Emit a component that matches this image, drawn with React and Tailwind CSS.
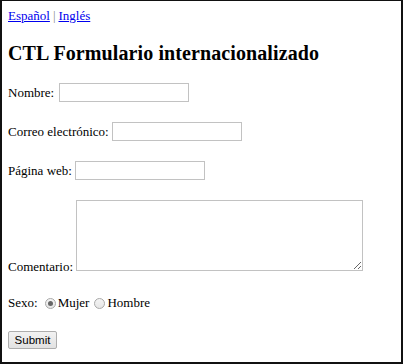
export default function App() {
  return (
    <div className="w-[403px] h-[364px] bg-white border-t border-l-2 border-r-2 border-b-2 border-[#111] overflow-hidden font-['Liberation_Serif',serif] text-[13px] leading-[16px] text-black">
      <div className="pl-[6px] pt-[7px] flex flex-col">
        <div className="h-[16px] flex items-center">
          <a href="#" className="text-[#0000ee] underline">Español</a>
          <span className="text-[#888] mx-[3px]">|</span>
          <a href="#" className="text-[#0000ee] underline">Inglés</a>
        </div>

        <h2 className="mt-[17px] text-[20px] leading-[24px] font-bold tracking-[0.1px]">CTL Formulario internacionalizado</h2>

        <div className="mt-[18px] flex items-center gap-[5px] h-[19px]">
          <span>Nombre:</span>
          <input type="text" className="w-[130px] h-[19px] border border-[#c2c2c2] bg-white outline-none" />
        </div>

        <div className="mt-[20px] flex items-center gap-[3px] h-[19px]">
          <span>Correo electrónico:</span>
          <input type="text" className="w-[130px] h-[19px] border border-[#c2c2c2] bg-white outline-none" />
        </div>

        <div className="mt-[20px] flex items-center gap-[3px] h-[19px]">
          <span>Página web:</span>
          <input type="text" className="w-[130px] h-[19px] border border-[#c2c2c2] bg-white outline-none" />
        </div>

        <div className="mt-[20px] flex items-end gap-[3px]">
          <span className="-mb-1">Comentario:</span>
          <textarea className="w-[287px] h-[71px] border border-[#c2c2c2] bg-white outline-none resize" />
        </div>

        <div className="mt-[24px] flex items-center h-[16px]">
          <span>Sexo:</span>
          <span className="ml-[7px] w-[11px] h-[11px] rounded-full border border-[#a8a8a8] bg-gradient-to-b from-[#f4f4f4] to-[#e6e6e6] flex items-center justify-center">
            <span className="w-[5px] h-[5px] rounded-full bg-[#666]" />
          </span>
          <span className="ml-[2px]">Mujer</span>
          <span className="ml-[5px] w-[11px] h-[11px] rounded-full border border-[#a8a8a8] bg-gradient-to-b from-[#f4f4f4] to-[#e6e6e6]" />
          <span className="ml-[2px]">Hombre</span>
        </div>

        <div className="mt-[20px]">
          <button className="w-[49px] h-[18px] border border-[#adadad] rounded-[2px] bg-gradient-to-b from-[#f2f2f2] to-[#e2e2e2] font-['Liberation_Sans',sans-serif] text-[11.5px] leading-[14px] text-black">
            Submit
          </button>
        </div>
      </div>
    </div>
  );
}
